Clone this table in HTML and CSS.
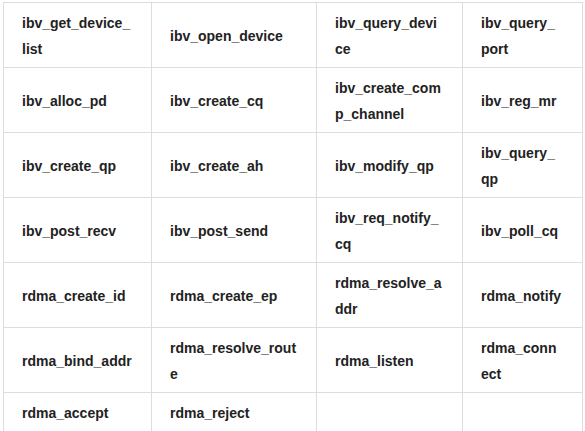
FILE: index.html
```html
<!DOCTYPE html>
<html>
<head>
<meta charset="utf-8">
<link rel="stylesheet" href="styles.css">
</head>
<body>
<table class="api-table">
  <colgroup>
    <col class="c1"><col class="c2"><col class="c3"><col class="c4">
  </colgroup>
  <tbody>
    <tr><td>ibv_get_device_list</td><td>ibv_open_device</td><td>ibv_query_device</td><td>ibv_query_port</td></tr>
    <tr><td>ibv_alloc_pd</td><td>ibv_create_cq</td><td>ibv_create_comp_channel</td><td>ibv_reg_mr</td></tr>
    <tr><td>ibv_create_qp</td><td>ibv_create_ah</td><td>ibv_modify_qp</td><td>ibv_query_qp</td></tr>
    <tr><td>ibv_post_recv</td><td>ibv_post_send</td><td>ibv_req_notify_cq</td><td>ibv_poll_cq</td></tr>
    <tr><td>rdma_create_id</td><td>rdma_create_ep</td><td>rdma_resolve_addr</td><td>rdma_notify</td></tr>
    <tr><td>rdma_bind_addr</td><td>rdma_resolve_route</td><td>rdma_listen</td><td>rdma_connect</td></tr>
    <tr class="last"><td>rdma_accept</td><td>rdma_reject</td><td></td><td></td></tr>
  </tbody>
</table>
</body>
</html>
```
FILE: styles.css
```css
html, body {
  margin: 0;
  padding: 0;
  background: #ffffff;
}
body {
  padding: 2px 0 0 3px;
}
.api-table {
  border-collapse: collapse;
  table-layout: fixed;
  width: 579px;
  font-family: "Liberation Sans", Arial, sans-serif;
  font-weight: bold;
  font-size: 14px;
  line-height: 26px;
  color: #222222;
}
.c1 { width: 148px; }
.c2 { width: 165px; }
.c3 { width: 146px; }
.c4 { width: 120px; }
.api-table td {
  border: 1px solid #dddddd;
  padding: 7px 19px 5px 18px;
  height: 52px;
  vertical-align: middle;
  word-break: break-all;
}
.api-table td:last-child {
  padding-right: 20px;
}
.api-table tr.last td {
  height: 25px;
}
```
